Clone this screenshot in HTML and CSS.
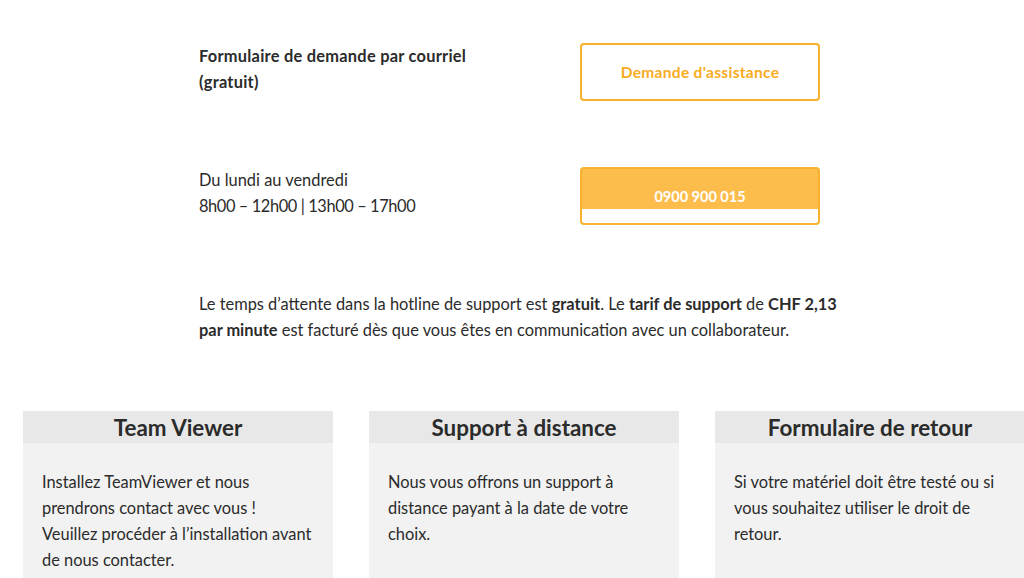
FILE: index.html
```html
<!DOCTYPE html>
<html lang="fr">
<head>
    <meta charset="UTF-8">
    <meta name="viewport" content="width=device-width, initial-scale=1.0">
    <title>Support</title>
    <link rel="stylesheet" href="styles.css">
</head>
<body>
    <section class="contact">
        <div class="contact-row">
            <p class="contact-label"><strong>Formulaire de demande par courriel<br>(gratuit)</strong></p>
            <a class="btn btn-outline" href="#">Demande d'assistance</a>
        </div>
        <div class="contact-row">
            <p class="contact-label">Du lundi au vendredi<br><span class="hours">8h00 – 12h00 | 13h00 – 17h00</span></p>
            <a class="btn btn-filled" href="#">0900 900 015</a>
        </div>
        <p class="contact-note">Le temps d’attente dans la hotline de support est <strong>gratuit</strong>. Le <strong>tarif de support</strong> de <strong>CHF 2,13<br>par minute</strong> est facturé dès que vous êtes en communication avec un collaborateur.</p>
    </section>

    <section class="cards">
        <div class="card">
            <h3 class="card-title">Team Viewer</h3>
            <p class="card-text">Installez TeamViewer et nous prendrons contact avec vous !<br>Veuillez procéder à l’installation avant de nous contacter.</p>
        </div>
        <div class="card">
            <h3 class="card-title">Support à distance</h3>
            <p class="card-text">Nous vous offrons un support à distance payant à la date de votre choix.</p>
        </div>
        <div class="card">
            <h3 class="card-title">Formulaire de retour</h3>
            <p class="card-text">Si votre matériel doit être testé ou si vous souhaitez utiliser le droit de retour.</p>
        </div>
    </section>
</body>
</html>
```

FILE: styles.css
```css
body {
    margin: 0;
    padding: 0;
    background-color: #ffffff;
    font-family: Lato, "Open Sans", sans-serif;
    font-size: 16.4px;
    line-height: 26px;
    color: #2b2b2b;
    overflow: hidden;
}
.contact {
    padding: 43px 0 0 199px;
}
.contact-row {
    display: grid;
    grid-template-columns: 381px 240px;
    height: 58px;
    margin-bottom: 66px;
}
.contact-label {
    margin: 0;
}
.contact-label strong {
    letter-spacing: 0.25px;
}
.hours {
    letter-spacing: -0.4px;
}
.btn {
    display: flex;
    align-items: center;
    justify-content: center;
    box-sizing: border-box;
    height: 58px;
    border: 2px solid #f8b12c;
    border-radius: 4px;
    font-weight: bold;
    text-decoration: none;
}
.btn-outline {
    color: #f8ac1e;
    background-color: #ffffff;
    font-size: 15.5px;
    letter-spacing: 0.3px;
}
.btn-filled {
    color: #ffffff;
    background: linear-gradient(#fdbd4c 0, #fdbd4c 40px, #ffffff 40px);
    padding-top: 2px;
    font-size: 14.5px;
}
.contact-note {
    margin: 0;
    width: 660px;
}
.cards {
    display: flex;
    gap: 36px;
    margin-top: 68px;
    padding-left: 23px;
}
.card {
    flex: 0 0 310px;
    background-color: #f2f2f2;
    min-height: 200px;
}
.card-title {
    margin: 0;
    height: 32px;
    line-height: 34px;
    background-color: #e8e8e8;
    text-align: center;
    font-size: 22.4px;
    font-weight: bold;
    color: #2b2b2b;
}
.card-text {
    margin: 0;
    padding: 26px 19px 0 19px;
}
```
